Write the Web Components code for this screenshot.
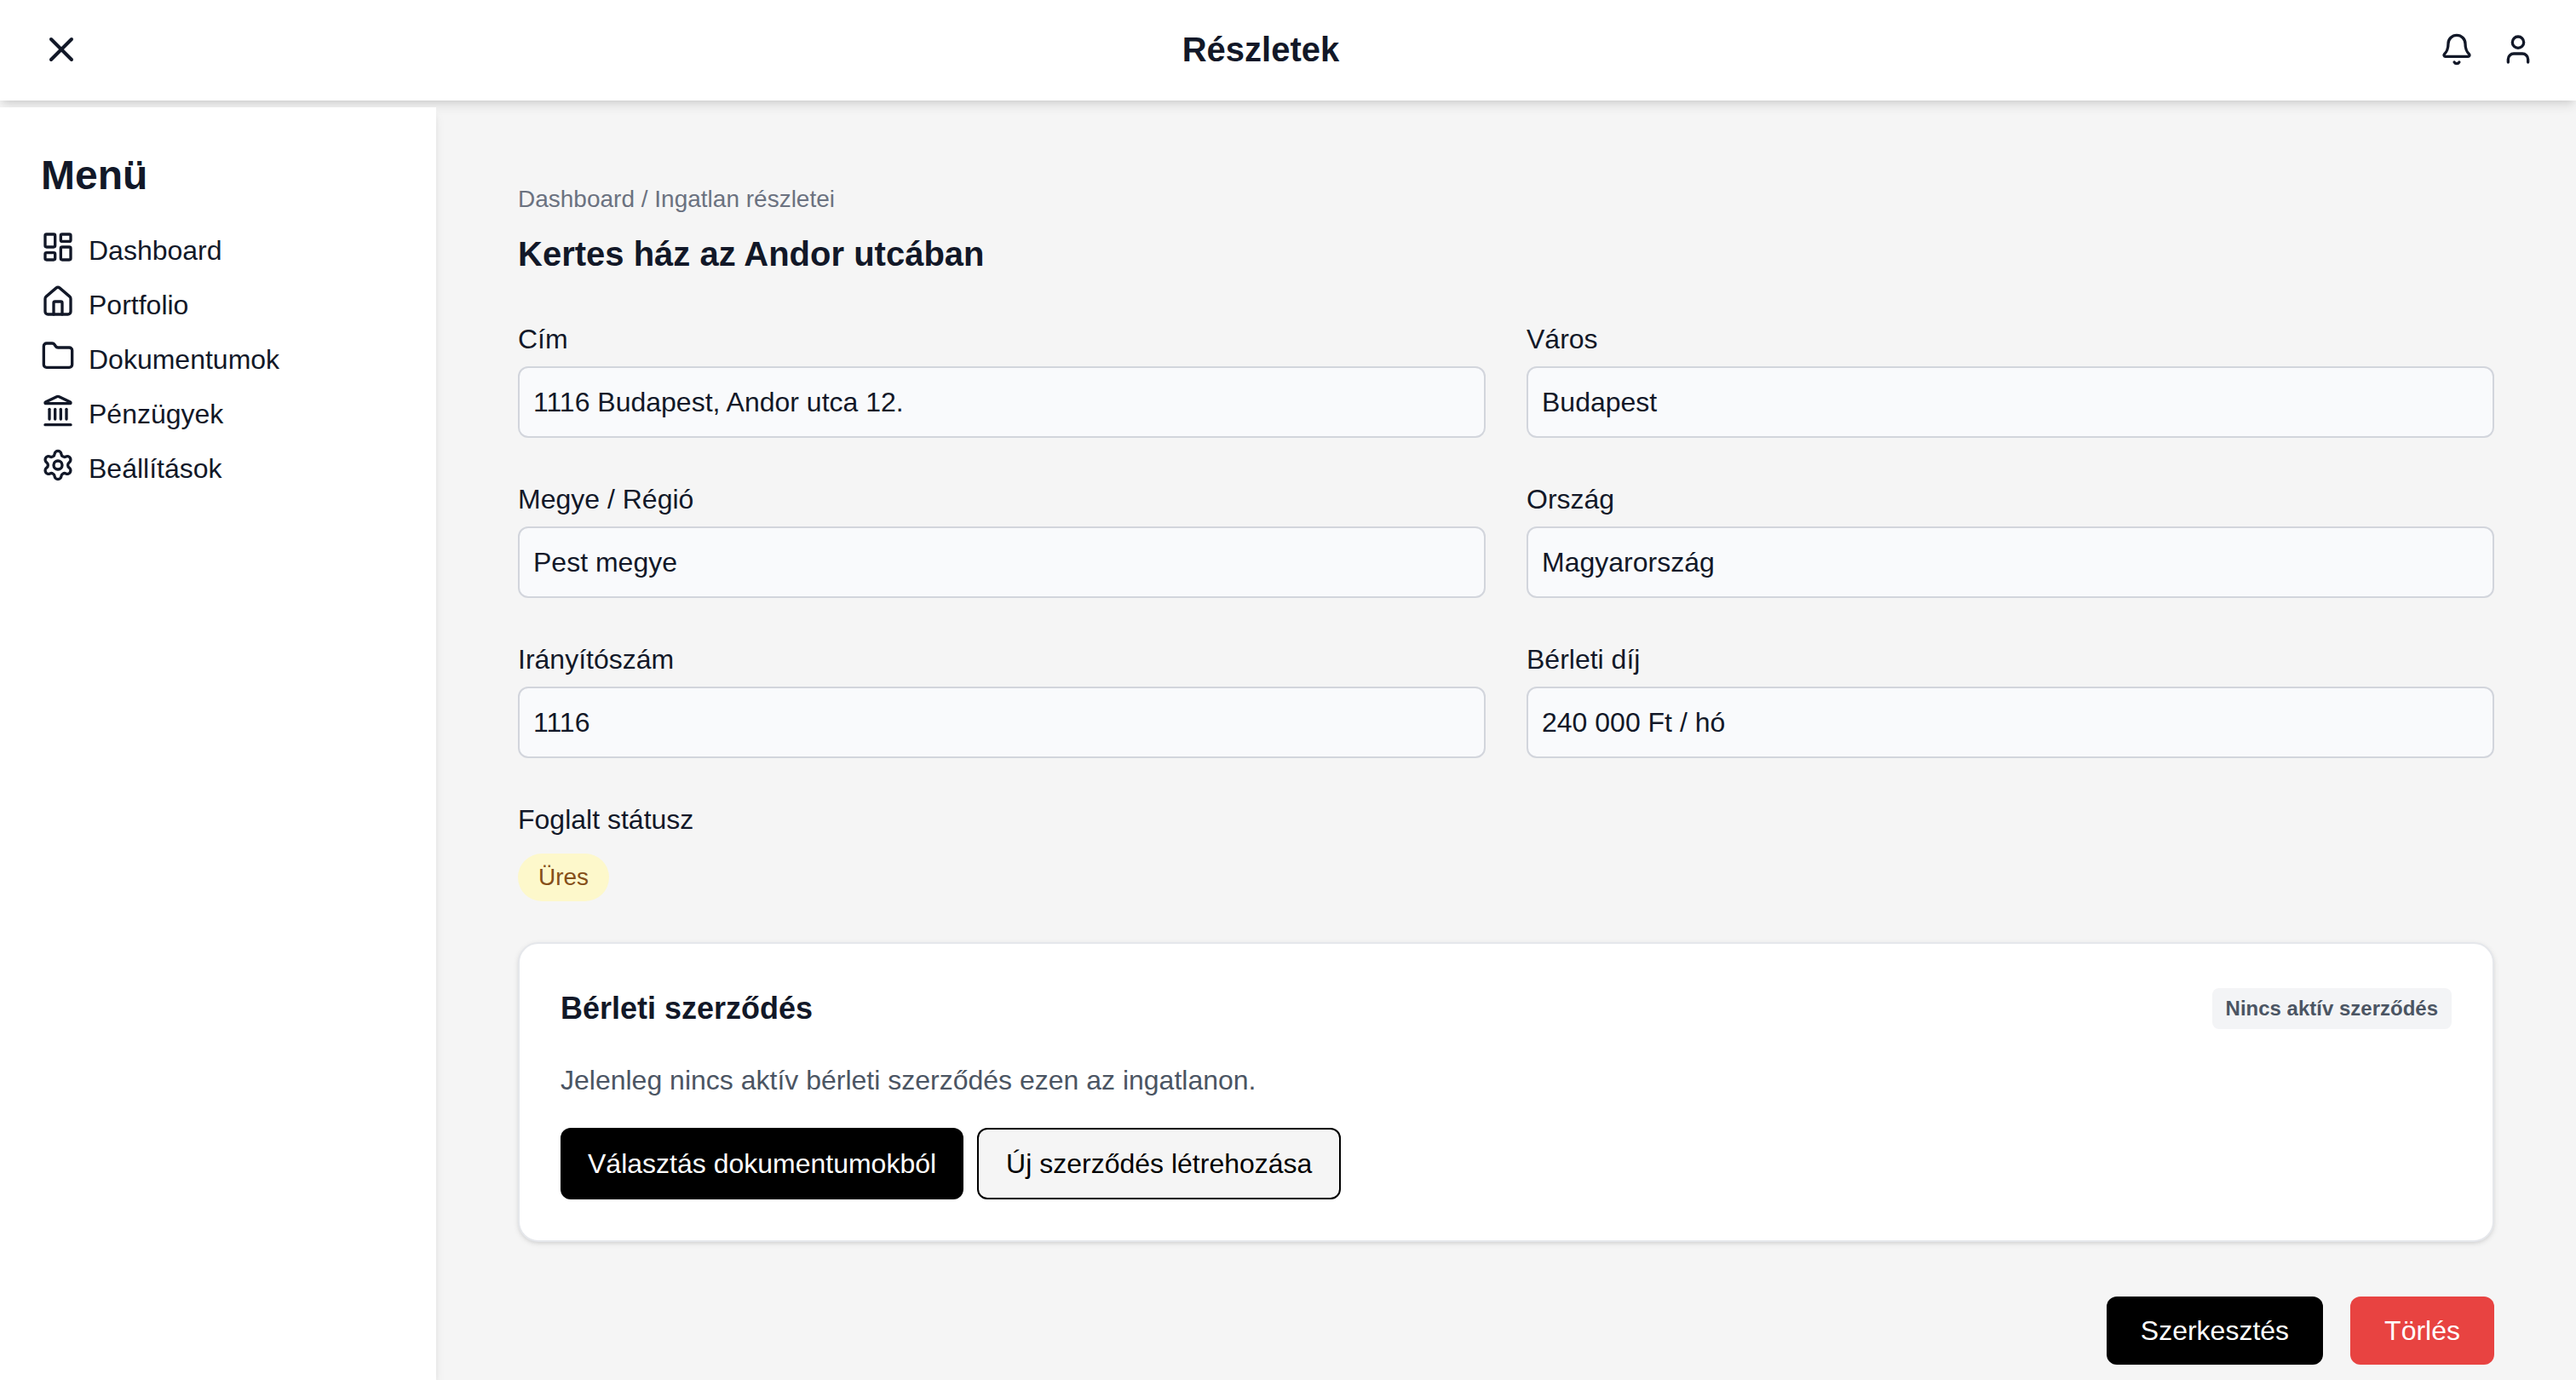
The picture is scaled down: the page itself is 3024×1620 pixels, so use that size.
<!DOCTYPE html>
<html lang="hu">
<head>
<meta charset="utf-8">
<meta name="viewport" content="width=device-width, initial-scale=1">
<title>Részletek</title>
<style>
  html { background: #f5f5f5; }
  body {
    margin: 0;
    color: #121828;
    font-family: "Liberation Sans", Arial, Helvetica, sans-serif;
    font-size: 32px;
    line-height: 48px;
  }
</style>
</head>
<body>
<app-shell>
  <app-header slot="header">Részletek</app-header>
  <side-menu slot="menu" heading="Menü">
    <menu-link icon="dashboard">Dashboard</menu-link>
    <menu-link icon="house">Portfolio</menu-link>
    <menu-link icon="folder">Dokumentumok</menu-link>
    <menu-link icon="landmark">Pénzügyek</menu-link>
    <menu-link icon="settings">Beállítások</menu-link>
  </side-menu>
  <property-details crumbs="Dashboard / Ingatlan részletei" heading="Kertes ház az Andor utcában">
    <read-field label="Cím" value="1116 Budapest, Andor utca 12."></read-field>
    <read-field label="Város" value="Budapest"></read-field>
    <read-field label="Megye / Régió" value="Pest megye"></read-field>
    <read-field label="Ország" value="Magyarország"></read-field>
    <read-field label="Irányítószám" value="1116"></read-field>
    <read-field label="Bérleti díj" value="240 000 Ft / hó"></read-field>
    <status-field label="Foglalt státusz">Üres</status-field>
    <contract-card slot="card" heading="Bérleti szerződés" badge="Nincs aktív szerződés">
      Jelenleg nincs aktív bérleti szerződés ezen az ingatlanon.
      <ui-button slot="actions" kind="primary">Választás dokumentumokból</ui-button>
      <ui-button slot="actions" kind="outline">Új szerződés létrehozása</ui-button>
    </contract-card>
    <ui-button slot="actions" kind="edit">Szerkesztés</ui-button>
    <ui-button slot="actions" kind="danger">Törlés</ui-button>
  </property-details>
</app-shell>

<script>
const ICONS = {
  close: '<path d="M18 6 6 18"/><path d="m6 6 12 12"/>',
  bell: '<path d="M10.268 21a2 2 0 0 0 3.464 0"/><path d="M3.262 15.326A1 1 0 0 0 4 17h16a1 1 0 0 0 .74-1.673C19.41 13.956 18 12.499 18 8A6 6 0 0 0 6 8c0 4.499-1.411 5.956-2.738 7.326"/>',
  user: '<path d="M19 21v-2a4 4 0 0 0-4-4H9a4 4 0 0 0-4 4v2"/><circle cx="12" cy="7" r="4"/>',
  dashboard: '<rect width="7" height="9" x="3" y="3" rx="1"/><rect width="7" height="5" x="14" y="3" rx="1"/><rect width="7" height="9" x="14" y="12" rx="1"/><rect width="7" height="5" x="3" y="16" rx="1"/>',
  house: '<path d="M15 21v-8a1 1 0 0 0-1-1h-4a1 1 0 0 0-1 1v8"/><path d="M3 10a2 2 0 0 1 .709-1.528l7-5.999a2 2 0 0 1 2.582 0l7 5.999A2 2 0 0 1 21 10v9a2 2 0 0 1-2 2H5a2 2 0 0 1-2-2z"/>',
  folder: '<path d="M20 20a2 2 0 0 0 2-2V8a2 2 0 0 0-2-2h-7.9a2 2 0 0 1-1.69-.9L9.6 3.9A2 2 0 0 0 7.93 3H4a2 2 0 0 0-2 2v13a2 2 0 0 0 2 2Z"/>',
  landmark: '<path d="M10 18v-7"/><path d="M11.12 2.198a2 2 0 0 1 1.76.006l7.866 3.847c.476.233.31.949-.22.949H3.474c-.53 0-.695-.716-.22-.949z"/><path d="M14 18v-7"/><path d="M18 18v-7"/><path d="M3 22h18"/><path d="M6 18v-7"/>',
  settings: '<path d="M9.671 4.136a2.34 2.34 0 0 1 4.659 0 2.34 2.34 0 0 0 3.319 1.915 2.34 2.34 0 0 1 2.33 4.033 2.34 2.34 0 0 0 0 3.831 2.34 2.34 0 0 1-2.33 4.033 2.34 2.34 0 0 0-3.319 1.915 2.34 2.34 0 0 1-4.659 0 2.34 2.34 0 0 0-3.32-1.915 2.34 2.34 0 0 1-2.33-4.033 2.34 2.34 0 0 0 0-3.831A2.34 2.34 0 0 1 6.35 6.051a2.34 2.34 0 0 0 3.319-1.915"/><circle cx="12" cy="12" r="3"/>'
};
const icon = (name, size) =>
  `<svg width="${size}" height="${size}" viewBox="0 0 24 24" fill="none" stroke="currentColor" stroke-width="2" stroke-linecap="round" stroke-linejoin="round" aria-hidden="true">${ICONS[name]}</svg>`;

class Base extends HTMLElement {
  connectedCallback() {
    if (!this.shadowRoot) this.attachShadow({ mode: 'open' }).innerHTML = this.view();
  }
  attr(name) { return this.getAttribute(name) || ''; }
}

customElements.define('app-shell', class extends Base {
  view() {
    return `<style>
      :host { display: flex; flex-direction: column; min-height: 100vh; }
      .body { flex: 1; display: flex; }
      ::slotted(side-menu) { flex: none; margin-top: 8px; }
      main { flex: 1; min-width: 0; }
    </style>
    <slot name="header"></slot>
    <div class="body"><slot name="menu"></slot><main><slot></slot></main></div>`;
  }
});

customElements.define('app-header', class extends Base {
  view() {
    return `<style>
      :host { display: block; background: #fff; box-shadow: 0 8px 12px -2px rgb(0 0 0 / .1), 0 4px 8px -4px rgb(0 0 0 / .1); }
      header { display: flex; align-items: center; justify-content: space-between; padding: 30px 48px 32px; }
      h1 { margin: 0; font-size: 40px; line-height: 56px; font-weight: 700; }
      .icons { display: flex; gap: 32px; }
      button { display: block; margin: 0; padding: 0; border: 0; background: none; color: inherit; cursor: pointer; }
      svg { display: block; }
    </style>
    <header>
      <button type="button" aria-label="Bezárás">${icon('close', 48)}</button>
      <h1><slot></slot></h1>
      <div class="icons">
        <button type="button" aria-label="Értesítések">${icon('bell', 40)}</button>
        <button type="button" aria-label="Profil">${icon('user', 40)}</button>
      </div>
    </header>`;
  }
});

customElements.define('side-menu', class extends Base {
  view() {
    return `<style>
      :host { display: block; box-sizing: border-box; width: 512px; padding: 48px; background: #fff; box-shadow: 0 8px 12px -2px rgb(0 0 0 / .1), 0 4px 8px -4px rgb(0 0 0 / .1); }
      h2 { margin: 0 0 32px; font-size: 48px; line-height: 64px; font-weight: 700; }
      nav { display: flex; flex-direction: column; gap: 16px; }
    </style>
    <h2>${this.attr('heading')}</h2>
    <nav><slot></slot></nav>`;
  }
});

customElements.define('menu-link', class extends Base {
  view() {
    return `<style>
      :host { display: block; }
      a { display: flex; align-items: flex-start; gap: 16px; color: inherit; text-decoration: none; }
      svg { display: block; flex: none; }
    </style>
    <a href="#">${icon(this.attr('icon'), 40)}<span><slot></slot></span></a>`;
  }
});

customElements.define('property-details', class extends Base {
  view() {
    return `<style>
      :host { display: flex; flex-direction: column; padding: 96px 96px 16px; }
      .crumbs { margin: 0 0 16px; color: #6b7280; font-size: 28px; line-height: 40px; }
      h2 { margin: 0 0 48px; font-size: 40px; line-height: 56px; font-weight: 700; }
      .grid { display: grid; grid-template-columns: repeat(2, minmax(0, 1fr)); gap: 48px; margin-bottom: 48px; }
      .actions { display: flex; justify-content: flex-end; gap: 32px; margin-top: 64px; }
    </style>
    <p class="crumbs">${this.attr('crumbs')}</p>
    <h2>${this.attr('heading')}</h2>
    <div class="grid"><slot></slot></div>
    <slot name="card"></slot>
    <div class="actions"><slot name="actions"></slot></div>`;
  }
});

customElements.define('read-field', class extends Base {
  view() {
    return `<style>
      :host { display: flex; flex-direction: column; gap: 8px; }
      input { box-sizing: border-box; width: 100%; margin: 0; padding: 16px; border: 2px solid #d2d5dc; border-radius: 12px; background: #f9fafc; color: inherit; font: inherit; height: 84px; outline: none; }
    </style>
    <label for="field">${this.attr('label')}</label>
    <input id="field" type="text" readonly value="${this.attr('value')}">`;
  }
});

customElements.define('status-field', class extends Base {
  view() {
    return `<style>
      :host { display: flex; flex-direction: column; align-items: flex-start; gap: 16px; }
      .pill { padding: 8px 24px; border-radius: 28px; background: #fdf8cb; color: #854f19; font-size: 28px; line-height: 40px; }
    </style>
    <span>${this.attr('label')}</span>
    <span class="pill"><slot></slot></span>`;
  }
});

customElements.define('contract-card', class extends Base {
  view() {
    return `<style>
      :host { display: flex; flex-direction: column; gap: 32px; padding: 48px; border: 2px solid #e5e7eb; border-radius: 24px; background: #fff; box-shadow: 0 2px 6px rgb(0 0 0 / .1), 0 2px 4px -2px rgb(0 0 0 / .1); }
      .top { display: flex; align-items: center; justify-content: space-between; }
      h3 { margin: 0; font-size: 36px; line-height: 56px; font-weight: 700; }
      .badge { padding: 8px 16px; border-radius: 8px; background: #f3f4f6; color: #4b5563; font-size: 24px; line-height: 32px; font-weight: 700; }
      p { margin: 0; color: #4b5563; }
      .actions { display: flex; gap: 16px; }
    </style>
    <div class="top"><h3>${this.attr('heading')}</h3><span class="badge">${this.attr('badge')}</span></div>
    <p><slot></slot></p>
    <div class="actions"><slot name="actions"></slot></div>`;
  }
});

customElements.define('ui-button', class extends Base {
  view() {
    return `<style>
      :host { display: flex; }
      button { margin: 0; border: 0; border-radius: 12px; padding: 16px 40px; background: #000; color: #fff; font: inherit; cursor: pointer; }
      .primary, .outline { padding: 16px 32px; }
      .outline { border: 2px solid #000; background: #f5f5f5; color: #000; }
      .danger { background: #e84341; }
    </style>
    <button type="button" class="${this.attr('kind')}"><slot></slot></button>`;
  }
});
</script>
</body>
</html>
